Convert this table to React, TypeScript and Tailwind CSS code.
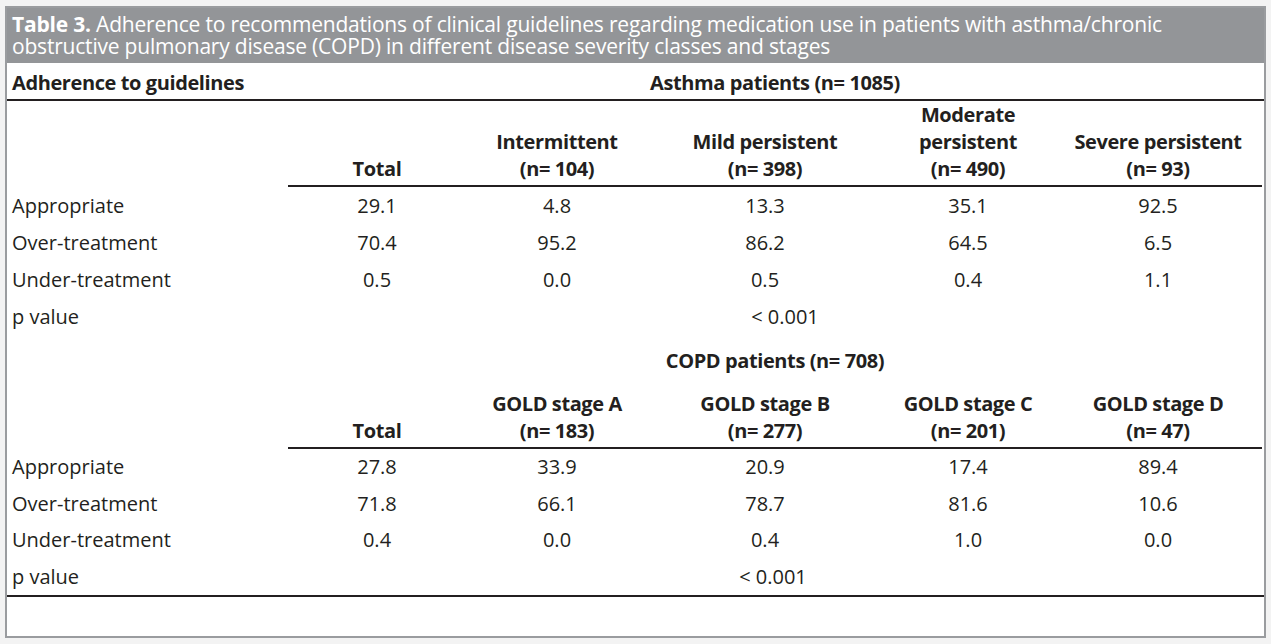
const cols = "grid grid-cols-[281px_178px_182px_234px_172px_208px]";

const asthmaHead = [
  ["Total"],
  ["Intermittent", "(n= 104)"],
  ["Mild persistent", "(n= 398)"],
  ["Moderate", "persistent", "(n= 490)"],
  ["Severe persistent", "(n= 93)"],
];

const copdHead = [
  ["Total"],
  ["GOLD stage A", "(n= 183)"],
  ["GOLD stage B", "(n= 277)"],
  ["GOLD stage C", "(n= 201)"],
  ["GOLD stage D", "(n= 47)"],
];

const asthmaRows = [
  ["Appropriate", "29.1", "4.8", "13.3", "35.1", "92.5"],
  ["Over-treatment", "70.4", "95.2", "86.2", "64.5", "6.5"],
  ["Under-treatment", "0.5", "0.0", "0.5", "0.4", "1.1"],
];

const copdRows = [
  ["Appropriate", "27.8", "33.9", "20.9", "17.4", "89.4"],
  ["Over-treatment", "71.8", "66.1", "78.7", "81.6", "10.6"],
  ["Under-treatment", "0.4", "0.0", "0.4", "1.0", "0.0"],
];

const HeadRow = ({ heads, height }: { heads: string[][]; height: string }) => (
  <div className={`${cols} ${height}`}>
    <div />
    {heads.map((h, i) => (
      <div
        key={i}
        className="flex flex-col items-center justify-end border-b-2 border-[#231f20] pb-[3px] text-center font-bold leading-[27px] tracking-[-0.4px]"
      >
        {h.map((line) => (
          <span key={line}>{line}</span>
        ))}
      </div>
    ))}
  </div>
);

const DataRows = ({
  rows,
  p,
  pOffset,
  rowH,
}: {
  rows: string[][];
  p: string;
  pOffset: string;
  rowH: string;
}) => (
  <>
    {rows.map((r) => (
      <div key={r[0]} className={`${cols} ${rowH} items-center`}>
        {r.map((c, i) => (
          <div key={i} className={i === 0 ? "pl-[5px]" : "text-center"}>
            {c}
          </div>
        ))}
      </div>
    ))}
    <div className={`${cols} ${rowH} items-center`}>
      <div className="pl-[5px]">p value</div>
      <div />
      <div />
      <div className={`text-center ${pOffset}`}>{p}</div>
    </div>
  </>
);

export default function App() {
  return (
    <div className="h-[644px] w-[1271px] bg-[#f3f3f3] px-[5px] pt-[6px] font-['Open_Sans',sans-serif] text-[20px] text-[#231f20]">
      <div className="flex h-[632px] flex-col border-[2px] border-[#9a9c9f] bg-white">
        {/* Caption */}
        <div className="h-[55px] bg-[#939598] px-[5px] pt-[4px] text-[21px] leading-[24px] tracking-[-0.2px] text-white">
          <p>
            <span className="font-bold">Table 3.</span> Adherence to recommendations of clinical guidelines regarding
            medication use in patients with asthma/chronic
          </p>
          <p className="-mt-[2px]">
            obstructive pulmonary disease (COPD) in different disease severity classes and stages
          </p>
        </div>

        {/* Asthma */}
        <div className={`${cols} h-[38px] items-center border-b-2 border-[#231f20] pt-[3px] font-bold tracking-[-0.4px]`}>
          <div className="pl-[5px]">Adherence to guidelines</div>
          <div className="col-span-5 text-center">Asthma patients (n= 1085)</div>
        </div>
        <HeadRow heads={asthmaHead} height="h-[86px]" />
        <DataRows rows={asthmaRows} p="< 0.001" pOffset="pl-[40px]" rowH="h-[37px]" />

        {/* COPD */}
        <div className={`${cols} h-[52px] items-center font-bold tracking-[-0.4px]`}>
          <div />
          <div className="col-span-5 text-center">COPD patients (n= 708)</div>
        </div>
        <HeadRow heads={copdHead} height="h-[62px]" />
        <DataRows rows={copdRows} p="< 0.001" pOffset="pl-[16px]" rowH="h-[36.5px]" />

        <div className="border-b-2 border-[#231f20]" />
      </div>
    </div>
  );
}
